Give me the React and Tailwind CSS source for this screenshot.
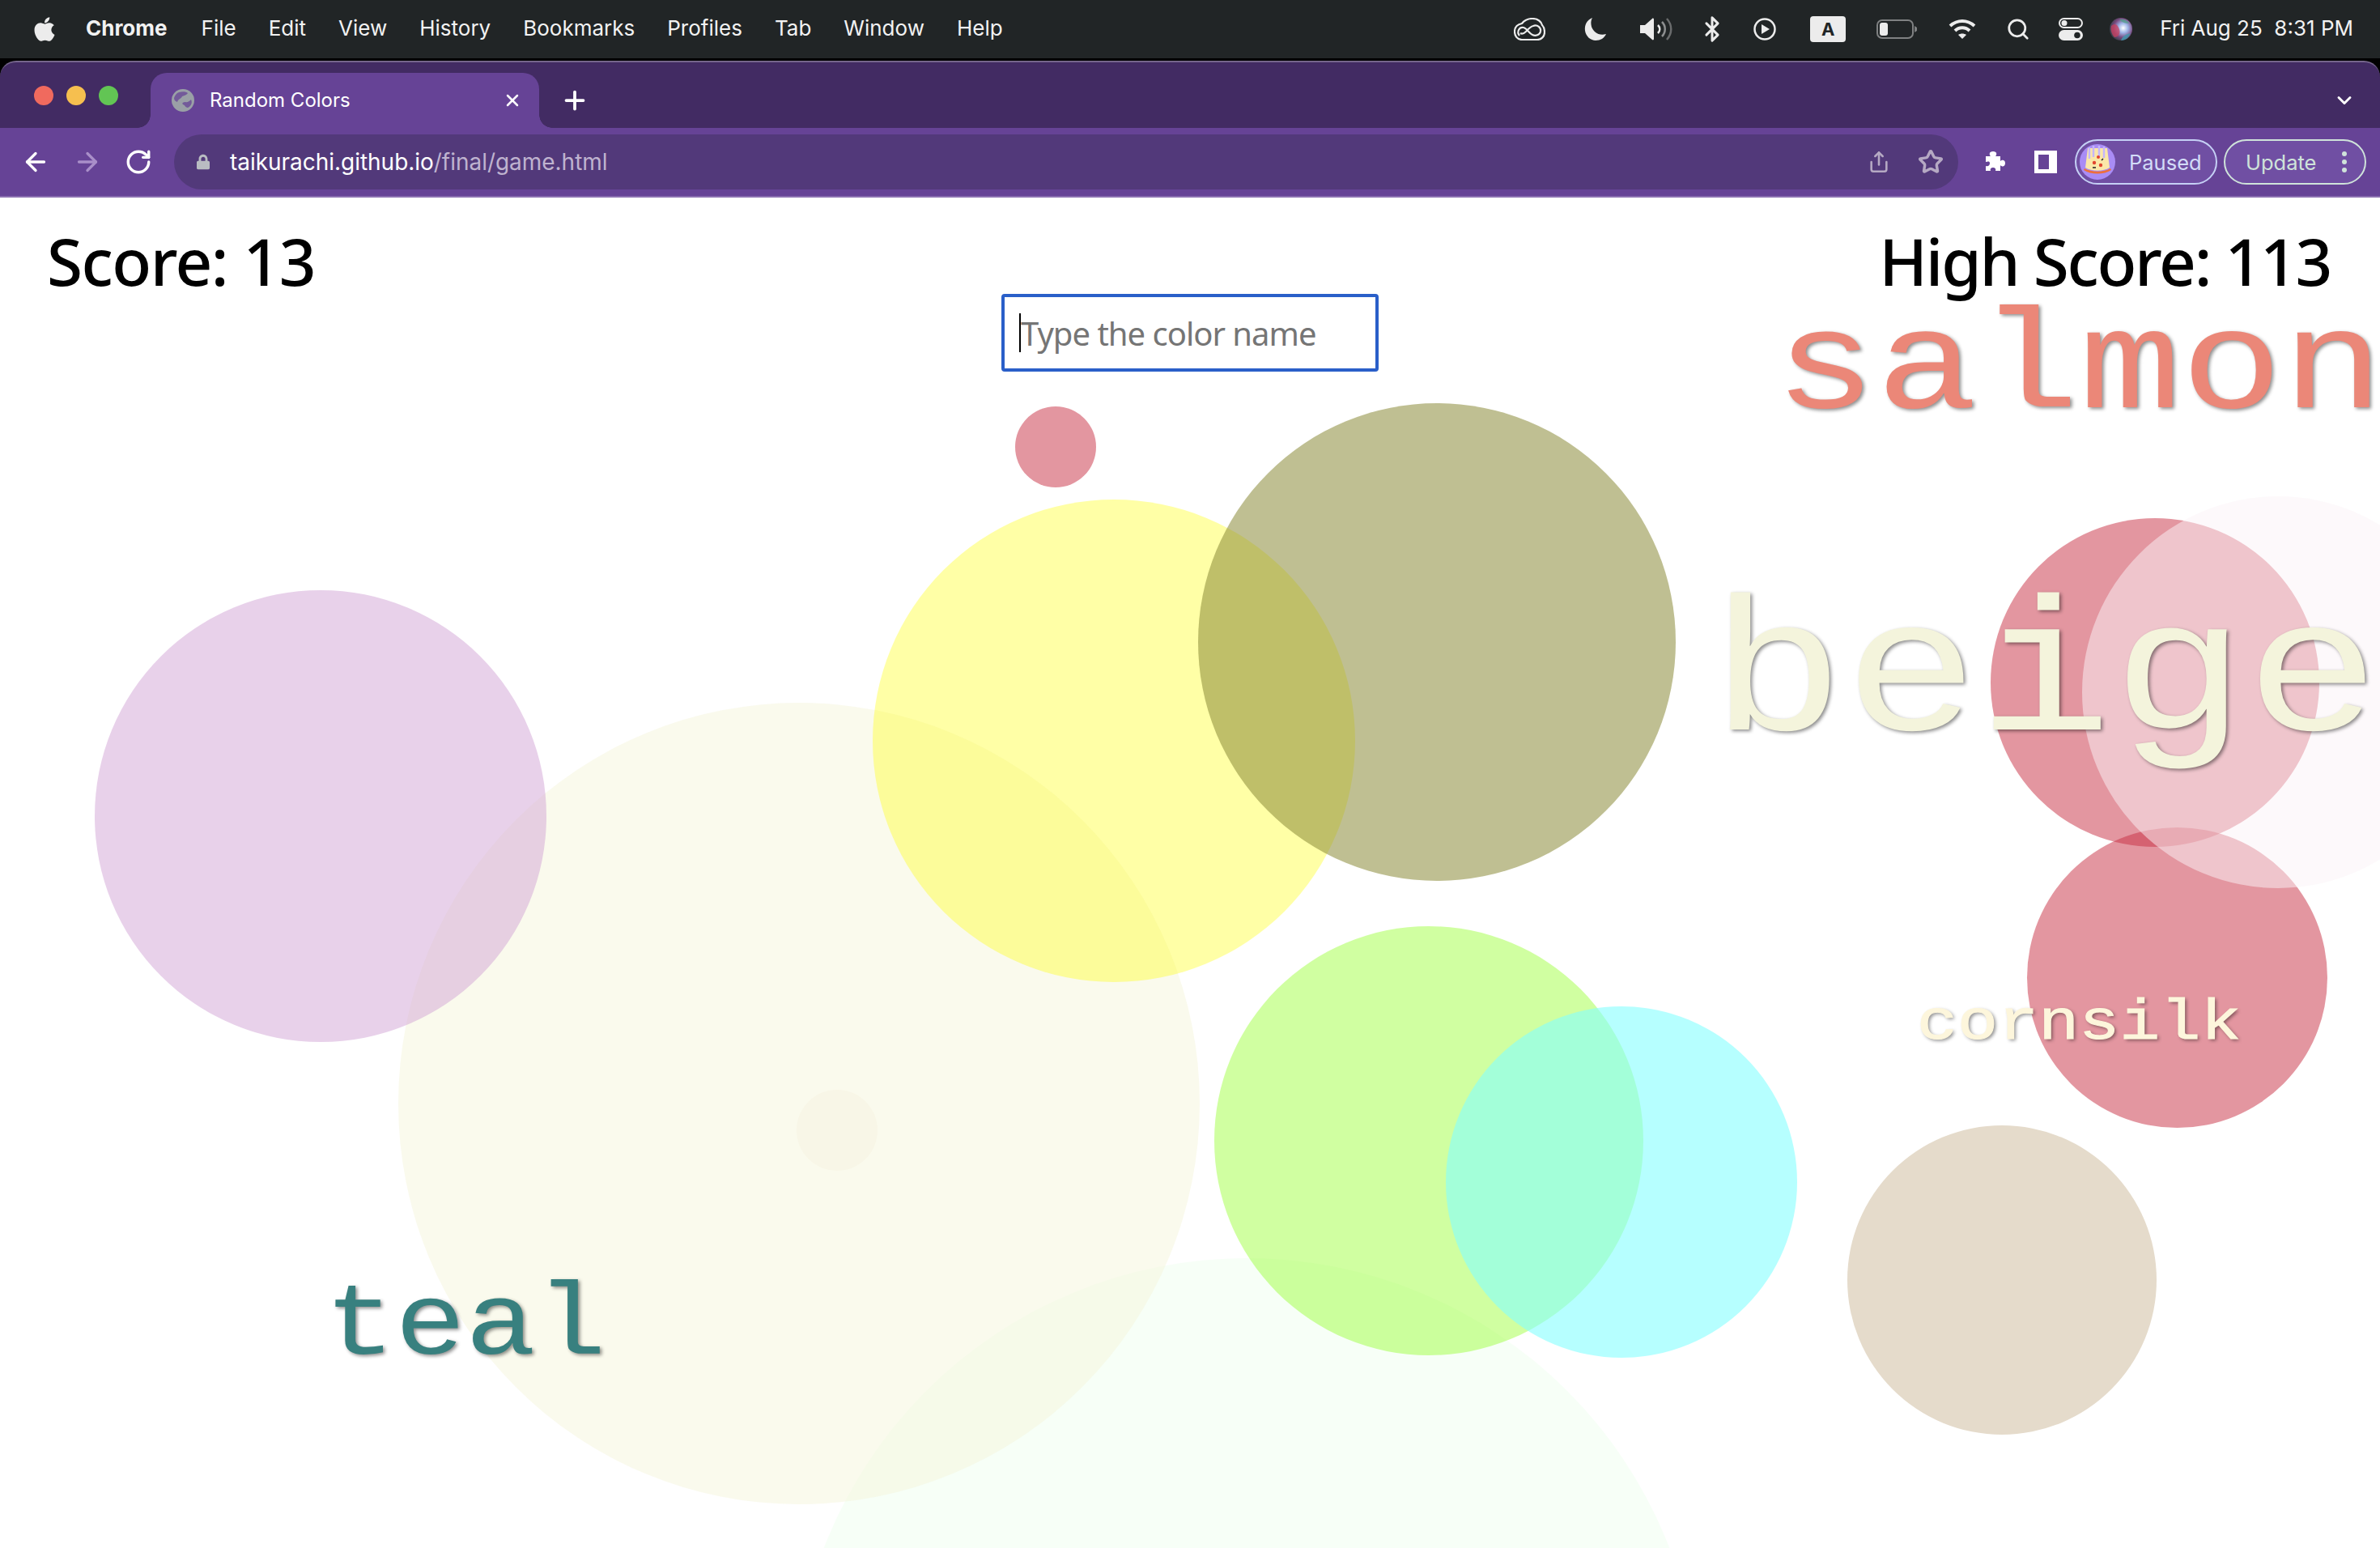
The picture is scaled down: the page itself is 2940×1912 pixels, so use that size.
import { ArrowLeft, ArrowRight, RotateCw, X, Plus, ChevronDown, Star, Share, Search, Bluetooth } from "lucide-react";
import { FaApple, FaLock } from "react-icons/fa";

const menuItems = ["File", "Edit", "View", "History", "Bookmarks", "Profiles", "Tab", "Window", "Help"];

// every circle of the game, painted in this order
const circles = [
  "left-[980px] top-[1310px] size-[1120px] bg-[rgba(240,255,240,0.5)]",
  "left-[492px] top-[624px] size-[990px] bg-[rgba(245,245,220,0.5)]",
  "left-[984px] top-[1102px] size-[100px] bg-[rgba(240,230,200,0.16)]",
  "left-[117px] top-[485px] size-[558px] bg-[rgba(209,163,213,0.5)]",
  "left-[1078px] top-[373px] size-[596px] bg-[rgba(255,255,0,0.35)]",
  "left-[1480px] top-[254px] size-[590px] bg-[rgba(136,136,54,0.54)]",
  "left-[1500px] top-[900px] size-[530px] bg-[rgba(127,255,0,0.37)]",
  "left-[1786px] top-[999px] size-[434px] bg-[rgba(133,255,255,0.6)]",
  "left-[2282px] top-[1146px] size-[382px] bg-[#e5dbcb]",
  "left-[1254px] top-[258px] size-[100px] bg-[rgba(199,45,65,0.5)]",
  "left-[2459px] top-[396px] size-[406px] bg-[rgba(199,45,65,0.5)]",
  "left-[2504px] top-[778px] size-[371px] bg-[rgba(199,45,65,0.5)]",
  "left-[2572px] top-[369px] size-[484px] bg-[rgba(252,243,247,0.5)]",
];

const words = [
  { text: "salmon", className: "left-[2192px] top-[125px] text-[175px] scale-x-[1.195] text-[#eb8778]" },
  { text: "beige", className: "left-[2113px] top-[478px] text-[234px] scale-x-[1.177] text-[#f4f4dc]" },
  { text: "cornsilk", className: "left-[2368px] top-[985px] text-[71px] [-webkit-text-stroke:1px_#fdf6dc] scale-x-[1.175] text-[#fdf6dc]" },
  { text: "teal", className: "left-[401px] top-[1332px] text-[126px] scale-x-[1.15] text-[#38807f]" },
];

const CreativeCloud = () => (
  <svg viewBox="0 0 39 28" className="w-[39px] h-[28px]" fill="none" stroke="#ececec" strokeWidth="2.2">
    <path d="M10 27C4 27 1 22 1 17C1 11 5 8 10 7C13 3 18 1 23 1C30 1 34 5 35 9C37 11 38 14 38 18C38 23 34 27 29 27Z" />
    <path d="M7 22C3 17 7 11 12 12C16 13 19 19 23 21C27 23 32 21 33 17C34 12 29 8 24 10C20 11 17 15 15 17C13 19 10 20 8 19" />
  </svg>
);

const Moon = () => (
  <svg viewBox="0 0 28 28" className="w-[28px] h-[28px]" fill="#ececec">
    <path d="M10 0C3 3 0 9 1 16c1 7 7 12 13 12 6 0 11-3 13-8-9 3-16-3-18-9C8 7 8 3 10 0z" />
  </svg>
);

const Speaker = () => (
  <svg viewBox="0 0 42 28" className="w-[42px] h-[28px]" fill="none">
    <path d="M1 9h6l9-8c1-1 2 0 2 1v24c0 1-1 2-2 1l-9-8H1z" fill="#ececec" />
    <path d="M23 9c3 3 3 7 0 10" stroke="#ececec" strokeWidth="2.5" />
    <path d="M28 5c5 5 5 13 0 18" stroke="#8d8f90" strokeWidth="2.5" />
    <path d="M34 1c7 8 7 18 0 26" stroke="#6a6c6d" strokeWidth="2.5" />
  </svg>
);

const PlayCircle = () => (
  <svg viewBox="0 0 28 28" className="w-[28px] h-[28px]" fill="none">
    <circle cx="14" cy="14" r="12.5" stroke="#ececec" strokeWidth="2.5" />
    <path d="M10 8l10 6-10 6z" fill="#ececec" />
  </svg>
);

const Battery = () => (
  <svg viewBox="0 0 51 24" className="w-[51px] h-[24px]" fill="none">
    <rect x="1" y="1" width="44" height="22" rx="6" stroke="#7f8182" strokeWidth="2" />
    <rect x="4" y="4" width="10" height="16" rx="3" fill="#ececec" />
    <path d="M47 8l3 2v4l-3 2z" fill="#7f8182" />
  </svg>
);

const Wifi = () => (
  <svg viewBox="0 0 34 26" className="w-[34px] h-[26px]" fill="none" stroke="#ececec" strokeWidth="4">
    <path d="M2 9c9-8 21-8 30 0" />
    <path d="M8 15c5-5 13-5 18 0" />
    <path d="M17 25l-5-5c3-2 7-2 10 0z" fill="#ececec" stroke="none" />
  </svg>
);

const ControlCenter = () => (
  <svg viewBox="0 0 30 28" className="w-[30px] h-[28px]">
    <rect x="1" y="1" width="28" height="11" rx="5.5" fill="none" stroke="#ececec" strokeWidth="2" />
    <circle cx="7" cy="6.5" r="3.5" fill="#ececec" />
    <rect x="0" y="15" width="30" height="13" rx="6.5" fill="#ececec" />
    <circle cx="23" cy="21.5" r="3.8" fill="#212526" />
  </svg>
);

const Siri = () => (
  <svg viewBox="0 0 28 28" className="w-[28px] h-[28px]">
    <defs>
      <radialGradient id="siriA" cx="0.6" cy="0.45" r="0.6">
        <stop offset="0" stopColor="#ffffff" />
        <stop offset="0.35" stopColor="#9fb6e8" />
        <stop offset="0.7" stopColor="#7a4a80" />
        <stop offset="1" stopColor="#3a3f4a" />
      </radialGradient>
    </defs>
    <circle cx="14" cy="14" r="14" fill="url(#siriA)" />
    <path d="M2 10c4-4 8-2 10 4s-2 10-6 10C2 20 1 14 2 10z" fill="#c8405f" opacity="0.75" />
    <path d="M14 28c6 0 10-4 12-9-5 1-10 3-12 9z" fill="#3f9bb0" opacity="0.8" />
    <path d="M12 2c5-1 10 1 12 5-4 0-9-1-12-5z" fill="#4fa38a" opacity="0.7" />
  </svg>
);

const Globe = () => (
  <svg viewBox="0 0 28 28" className="w-[28px] h-[28px] shrink-0">
    <circle cx="14" cy="14" r="14" fill="#9aa0a6" />
    <path d="M9 4c4-1 9-1 11 1-2 3-5 3-7 4-1 3-5 3-6 7-3-1-4-3-4-5 1-3 3-6 6-7z" fill="#664396" opacity="0.75" />
    <path d="M24 13c2 4 0 8-4 10-3 0-3-3-6-4-2-2 1-3 3-3 2 1 5-1 7-3z" fill="#664396" opacity="0.75" />
  </svg>
);

const PuzzlePiece = () => (
  <svg viewBox="0 0 28 28" className="ml-[30px] w-[28px] h-[28px]" fill="#ffffff">
    <path d="M4 7h6c-2-2-2-6 3-6s5 4 3 6h6v6c2-2 6-2 6 2.500s-4 5-6 2.500v7h-6c1-3-1-4-3-4s-4 1-3 4H4v-6c3 1 5-1 5-3.500S7 13 4 14z" />
  </svg>
);

const PizzaAvatar = () => (
  <svg viewBox="0 0 44 44" className="w-[44px] h-[44px] shrink-0">
    <circle cx="22" cy="22" r="22" fill="#a98cf5" />
    <path d="M10 5h24l3 24c-8 5-22 5-30 0z" fill="#fbe7a8" />
    <path d="M12 4v14M17 2v14M24 2v14M30 3v14" stroke="#c5b6fb" strokeWidth="2.5" />
    <path d="M6 30c9 5 23 5 32 0l1 2c-9 6-25 6-34 0z" fill="#ee6f3c" />
    <circle cx="23" cy="16" r="2" fill="#e2452f" />
    <circle cx="18" cy="23" r="2.2" fill="#e2452f" />
    <circle cx="26" cy="26" r="2.2" fill="#e2452f" />
    <path d="M27 20l2-2M16 29h4" stroke="#222" strokeWidth="1.5" />
  </svg>
);

const MenuBar = () => (
  <div className="h-[72px] shrink-0 bg-[#212526] flex items-center justify-between text-[#f2f2f2] text-[26px]">
    <div className="flex items-center pl-[40px]">
      <FaApple className="w-[30px] h-[34px] text-[#ececec]" />
      <span className="ml-[36px] font-bold -mt-[3px]">Chrome</span>
      <div className="ml-[42px] flex items-center gap-[40px] -mt-[3px]">
        {menuItems.map((item) => (
          <span key={item}>{item}</span>
        ))}
      </div>
    </div>
    <div className="flex items-center pr-[33px]">
      <CreativeCloud />
      <span className="ml-[48px]"><Moon /></span>
      <span className="ml-[40px]"><Speaker /></span>
      <Bluetooth className="ml-[31px] w-[34px] h-[34px] text-[#ececec]" strokeWidth={2.1} />
      <span className="ml-[34px]"><PlayCircle /></span>
      <span className="ml-[42px] w-[44px] h-[32px] rounded-[4px] bg-[#ececec] flex items-center justify-center text-[#212526] text-[22px] font-bold">A</span>
      <span className="ml-[38px]"><Battery /></span>
      <span className="ml-[38px]"><Wifi /></span>
      <Search className="ml-[37px] w-[30px] h-[30px] text-[#ececec]" strokeWidth={2.2} />
      <span className="ml-[35px]"><ControlCenter /></span>
      <span className="ml-[33px]"><Siri /></span>
      <span className="ml-[34px] -mt-[3px]">Fri Aug 25&nbsp;&nbsp;8:31 PM</span>
    </div>
  </div>
);

const TabStrip = () => (
  <div className="h-[83px] shrink-0 bg-[#422b63] border-t-2 border-[#75658c] rounded-t-[20px] flex items-end">
    <div className="w-[186px] h-[81px] shrink-0 flex items-center gap-[16px] pl-[42px] pb-[0px]">
      <span className="size-[24px] rounded-full bg-[#f06a5e]" />
      <span className="size-[24px] rounded-full bg-[#f6bf4f]" />
      <span className="size-[24px] rounded-full bg-[#62c554]" />
    </div>
    <div className="relative w-[480px] h-[68px] bg-[#664396] rounded-t-[20px] flex items-center pl-[26px] text-white text-[24px]">
      <span className="absolute left-[-16px] bottom-0 size-[16px] bg-[radial-gradient(circle_at_0_0,transparent_15.5px,#664396_16px)]" />
      <span className="absolute right-[-16px] bottom-0 size-[16px] bg-[radial-gradient(circle_at_100%_0,transparent_15.5px,#664396_16px)]" />
      <Globe />
      <span className="ml-[19px]">Random Colors</span>
      <X className="absolute left-[435px] top-[22px] w-[24px] h-[24px]" strokeWidth={2.5} />
    </div>
    <Plus className="ml-[26px] mb-[16px] w-[36px] h-[36px] text-white" strokeWidth={2.5} />
    <ChevronDown className="ml-auto mr-[30px] mb-[20px] w-[28px] h-[28px] text-white" strokeWidth={2.5} />
  </div>
);

const Toolbar = () => (
  <div className="h-[86px] shrink-0 bg-[#664396] border-b-2 border-[#8a6fb0] flex items-center">
    <ArrowLeft className="ml-[26px] w-[36px] h-[36px] text-white" strokeWidth={2.2} />
    <ArrowRight className="ml-[28px] w-[36px] h-[36px] text-[#a98fc9]" strokeWidth={2.2} />
    <RotateCw className="ml-[28px] w-[34px] h-[34px] text-white" strokeWidth={2.4} />
    <div className="ml-[27px] w-[2204px] h-[68px] rounded-full bg-[#52397a] flex items-center pl-[28px] pr-[18px]">
      <FaLock className="w-[16px] h-[20px] text-[#b9bcc2]" />
      <span className="ml-[25px] text-[28px] tracking-[-0.03px] text-white">
        taikurachi.github.io<span className="text-[#bfb3cf]">/final/game.html</span>
      </span>
      <Share className="ml-auto w-[28px] h-[30px] text-[#b5a9c3]" strokeWidth={2.2} />
      <Star className="ml-[34px] w-[32px] h-[32px] text-[#b5a9c3]" strokeWidth={2.6} />
    </div>
    <PuzzlePiece />
    <div className="ml-[36px] w-[28px] h-[28px] bg-white pl-[5px] py-[5px] pr-[10px]">
      <div className="w-full h-full bg-[#664396]" />
    </div>
    <div className="ml-[22px] w-[176px] h-[56px] rounded-full border-2 border-[#c5d0f5] bg-[#704fa3] flex items-center pl-[4px] text-[#d3dcf8] text-[25.5px]">
      <PizzaAvatar />
      <span className="ml-[17px] pt-[2px]">Paused</span>
    </div>
    <div className="ml-[8px] w-[176px] h-[56px] rounded-full border-2 border-[#cfe3da] bg-[#704fa3] flex items-center pl-[25px] text-[#cfe3da] text-[25.5px]">
      <span className="pt-[2px]">Update</span>
      <span className="ml-[32px] flex flex-col gap-[4px]">
        <span className="size-[6px] rounded-full bg-[#cfe3da]" />
        <span className="size-[6px] rounded-full bg-[#cfe3da]" />
        <span className="size-[6px] rounded-full bg-[#cfe3da]" />
      </span>
    </div>
  </div>
);

const GamePage = () => (
  <div className="relative flex-1 bg-white overflow-hidden font-['Noto_Sans',sans-serif]">
    {circles.map((c) => (
      <div key={c} className={"absolute rounded-full " + c} />
    ))}
    {words.map((w) => (
      <div
        key={w.text}
        className={"absolute origin-top-left leading-none whitespace-pre font-['Liberation_Mono',monospace] [text-shadow:2px_2px_4px_rgba(0,0,0,0.45)] " + w.className}
      >
        {w.text}
      </div>
    ))}
    <div className="relative flex justify-between pl-[58px] pr-[61px] pt-[30px] text-[80px] leading-[96px] font-medium text-black">
      <span className="tracking-[-1.5px]">Score: 13</span>
      <span className="tracking-[-2.3px]">High Score: 113</span>
    </div>
    <div className="relative flex justify-center mt-[-7px]">
      <div className="relative">
        <input
          placeholder="Type the color name"
          className="w-[466px] h-[96px] border-4 border-[#2a5fc9] rounded-[4px] bg-white pl-[20px] text-[40px] tracking-[-1px] outline-none placeholder:text-[#757575]"
        />
        <span className="absolute left-[22px] top-[24px] w-[2px] h-[48px] bg-black" />
      </div>
    </div>
  </div>
);

export default function App() {
  return (
    <div className="w-[2940px] h-[1912px] overflow-hidden flex flex-col bg-black font-['Inter',sans-serif]">
      <MenuBar />
      <div className="h-[3px] shrink-0 bg-black" />
      <TabStrip />
      <Toolbar />
      <GamePage />
    </div>
  );
}
